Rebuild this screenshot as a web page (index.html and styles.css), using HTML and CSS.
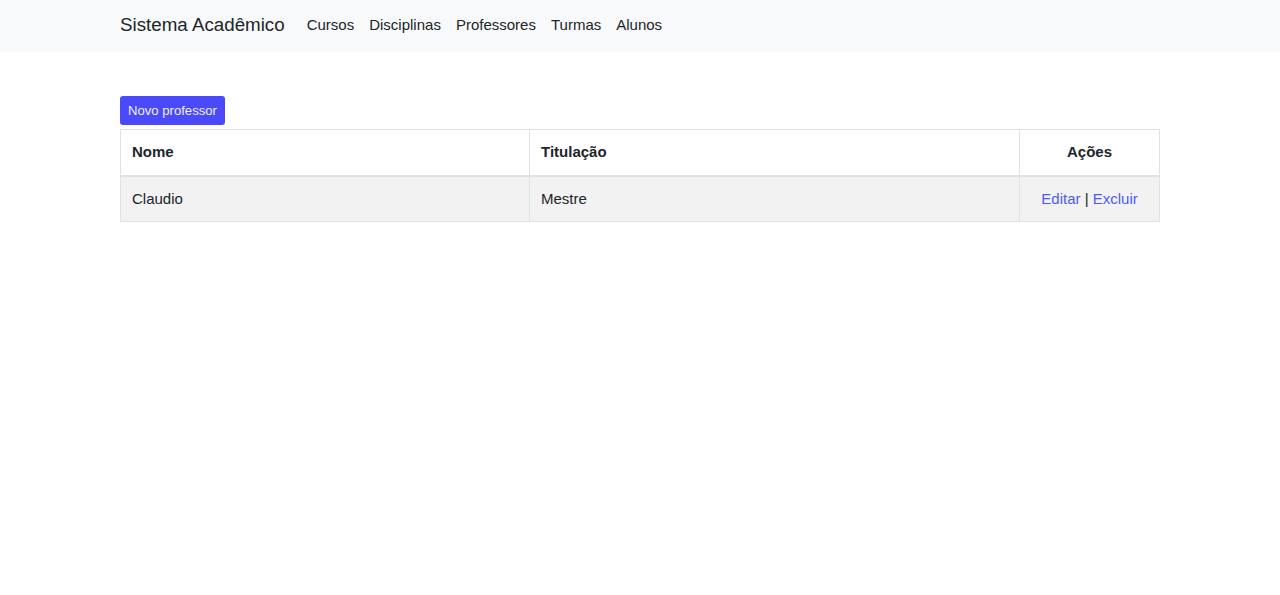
FILE: index.html
```html
<!DOCTYPE html>
<html lang="pt-BR">
<head>
<meta charset="utf-8">
<title>Sistema Acadêmico</title>
<link rel="stylesheet" href="styles.css">
</head>
<body>
<nav class="navbar">
  <div class="container nav-inner">
    <a class="brand" href="#">Sistema Acadêmico</a>
    <ul class="nav-links">
      <li><a href="#">Cursos</a></li>
      <li><a href="#">Disciplinas</a></li>
      <li><a href="#">Professores</a></li>
      <li><a href="#">Turmas</a></li>
      <li><a href="#">Alunos</a></li>
    </ul>
  </div>
</nav>
<main class="container main">
  <a class="btn" href="#">Novo professor</a>
  <table class="table">
    <thead>
      <tr>
        <th class="col-nome">Nome</th>
        <th class="col-tit">Titulação</th>
        <th class="col-acoes">Ações</th>
      </tr>
    </thead>
    <tbody>
      <tr>
        <td>Claudio</td>
        <td>Mestre</td>
        <td class="acoes"><a href="#">Editar</a> | <a href="#">Excluir</a></td>
      </tr>
    </tbody>
  </table>
</main>
</body>
</html>
```
FILE: styles.css
```css
* { box-sizing: border-box; }
html, body { margin: 0; padding: 0; }
body {
  font-family: "Liberation Sans", Arial, sans-serif;
  font-size: 15px;
  line-height: 22.5px;
  color: #212529;
  background: #fff;
}
.container {
  width: 1040px;
  margin: 0 auto;
}
.navbar {
  background: #f8f9fa;
  height: 52px;
}
.nav-inner {
  display: flex;
  align-items: center;
  height: 50px;
}
.brand {
  font-size: 18.75px;
  color: #212529;
  text-decoration: none;
  margin-right: 22px;
}
.nav-links {
  display: flex;
  list-style: none;
  margin: 0;
  padding: 0;
  gap: 15px;
}
.nav-links a {
  color: #212529;
  text-decoration: none;
  font-size: 15px;
}
.main {
  padding-top: 44px;
}
.btn {
  display: inline-block;
  background: #4a4afa;
  color: #f0f0ff;
  font-size: 13.125px;
  line-height: 20px;
  padding: 5px 8.5px 4px 8px;
  border-radius: 3px;
  text-decoration: none;
  margin-bottom: 4px;
}
.table {
  width: 100%;
  border-collapse: collapse;
  border: 1px solid #dee2e6;
}
.table th, .table td {
  border: 1px solid #dee2e6;
  padding: 11px 11px;
  text-align: left;
}
.table th { font-weight: bold; }
.table thead th { border-bottom: 2px solid #dee2e6; }
.col-nome { width: 409px; }
.col-tit { width: 490px; }
.col-acoes { text-align: center !important; }
.table tbody tr { background: #f2f2f2; }
.acoes { text-align: center !important; }
.acoes a { color: #4a5cf5; text-decoration: none; }
```
